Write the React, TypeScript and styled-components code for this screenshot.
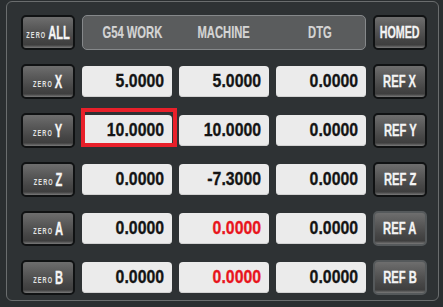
import { createGlobalStyle, styled } from "styled-components";

const GlobalStyle = createGlobalStyle`
    html, body {
        margin: 0;
        padding: 0;
        background: #2a2e30;
    }
    body {
        width: 443px;
        height: 307px;
        overflow: hidden;
    }
`;

const FONT = `"Liberation Sans", Arial, sans-serif`;

const Panel = styled.div`
    box-sizing: border-box;
    margin: 1px 0 0 6px;
    width: 433px;
    height: 300px;
    border: 1px solid #6a6d6e;
    border-radius: 6px;
    background: #2e3234;
    padding: 13px 0 0 14px;
    display: grid;
    grid-template-columns: 54px 90px 90px 90px 54px;
    grid-auto-rows: 35px;
    column-gap: 7px;
    row-gap: 14px;
    font-family: ${FONT};
    font-weight: bold;
`;

const Button = styled.div<{ $soft?: boolean }>`
    box-sizing: border-box;
    height: 35px;
    border: 2px solid ${(p) => (p.$soft ? "#55595b" : "#101213")};
    border-radius: 5px;
    background: linear-gradient(
        to bottom,
        #6e6e6e 0%,
        #5c5c5c 30%,
        #464646 70%,
        #3e3e3e 90%,
        #7a7a7a 100%
    );
    display: flex;
    align-items: center;
    justify-content: center;
    color: #f4f4f4;
    line-height: 1;
    -webkit-text-stroke: 0.3px currentColor;
`;

// the reference face is a tall condensed one, so squeeze Liberation Sans
const Squeeze = styled.span<{ $sx: number; $size: number; $origin?: string }>`
    display: inline-flex;
    align-items: baseline;
    white-space: nowrap;
    font-size: ${(p) => p.$size}px;
    transform: scaleX(${(p) => p.$sx});
    transform-origin: ${(p) => p.$origin ?? "center"};
`;

const Small = styled.span`
    font-size: 9px;
    letter-spacing: 1.8px;
    color: #e4e4e4;
    margin-right: 3px;
    -webkit-text-stroke: 0;
    transform: translateY(-1px);
`;

const Header = styled.div`
    grid-column: 2 / span 3;
    box-sizing: border-box;
    border: 1px solid #85888a;
    border-radius: 5px;
    background: #5a5c5d;
    display: grid;
    grid-template-columns: 98px 86px 1fr;
    align-items: center;
    color: #d4d4d4;
    -webkit-text-stroke: 0.2px currentColor;
`;

const HeaderLabel = styled.div<{ $shift?: number }>`
    display: flex;
    justify-content: center;
    transform: translateX(${(p) => p.$shift ?? 0}px);
`;

const Field = styled.div<{ $red?: boolean }>`
    position: relative;
    align-self: center;
    box-sizing: border-box;
    height: 31px;
    border-radius: 4px;
    background: #ebebeb;
    box-shadow: inset 0 -1px 0 #d2d2d2;
    display: flex;
    align-items: center;
    justify-content: flex-end;
    padding-right: 8px;
    color: ${(p) => (p.$red ? "#e8141c" : "#141414")};
    -webkit-text-stroke: 0.3px currentColor;
`;

const Highlight = styled.div`
    position: absolute;
    left: -1px;
    right: -5px;
    top: -7px;
    bottom: -1px;
    border: 4px solid #e8202a;
    pointer-events: none;
`;

interface AxisRow {
    axis: string;
    work: string;
    machine: string;
    dtg: string;
    redMachine?: boolean;
    soft?: boolean;
    selected?: boolean;
}

const rows: AxisRow[] = [
    { axis: "X", work: "5.0000", machine: "5.0000", dtg: "0.0000" },
    { axis: "Y", work: "10.0000", machine: "10.0000", dtg: "0.0000", selected: true },
    { axis: "Z", work: "0.0000", machine: "-7.3000", dtg: "0.0000" },
    { axis: "A", work: "0.0000", machine: "0.0000", dtg: "0.0000", redMachine: true, soft: true },
    { axis: "B", work: "0.0000", machine: "0.0000", dtg: "0.0000", redMachine: true, soft: true },
];

const Value = ({ text }: { text: string }) => (
    <Squeeze $sx={0.88} $size={18} $origin="right">
        {text}
    </Squeeze>
);

const ZeroLabel = ({ what }: { what: string }) => (
    <Squeeze $sx={0.62} $size={18}>
        <Small>ZERO</Small>
        {what}
    </Squeeze>
);

export default function App() {
    return (
        <>
            <GlobalStyle />
            <Panel>
                <Button>
                    <ZeroLabel what="ALL" />
                </Button>
                <Header>
                    <HeaderLabel>
                        <Squeeze $sx={0.66} $size={17}>G54 WORK</Squeeze>
                    </HeaderLabel>
                    <HeaderLabel>
                        <Squeeze $sx={0.66} $size={17}>MACHINE</Squeeze>
                    </HeaderLabel>
                    <HeaderLabel $shift={4}>
                        <Squeeze $sx={0.66} $size={17}>DTG</Squeeze>
                    </HeaderLabel>
                </Header>
                <Button>
                    <Squeeze $sx={0.63} $size={17}>HOMED</Squeeze>
                </Button>
                {rows.map((row) => (
                    <>
                        <Button key={`z${row.axis}`}>
                            <ZeroLabel what={row.axis} />
                        </Button>
                        <Field key={`w${row.axis}`}>
                            <Value text={row.work} />
                            {row.selected && <Highlight />}
                        </Field>
                        <Field key={`m${row.axis}`} $red={row.redMachine}>
                            <Value text={row.machine} />
                        </Field>
                        <Field key={`d${row.axis}`}>
                            <Value text={row.dtg} />
                        </Field>
                        <Button key={`r${row.axis}`} $soft={row.soft}>
                            <Squeeze $sx={0.7} $size={16}>
                                REF {row.axis}
                            </Squeeze>
                        </Button>
                    </>
                ))}
            </Panel>
        </>
    );
}
